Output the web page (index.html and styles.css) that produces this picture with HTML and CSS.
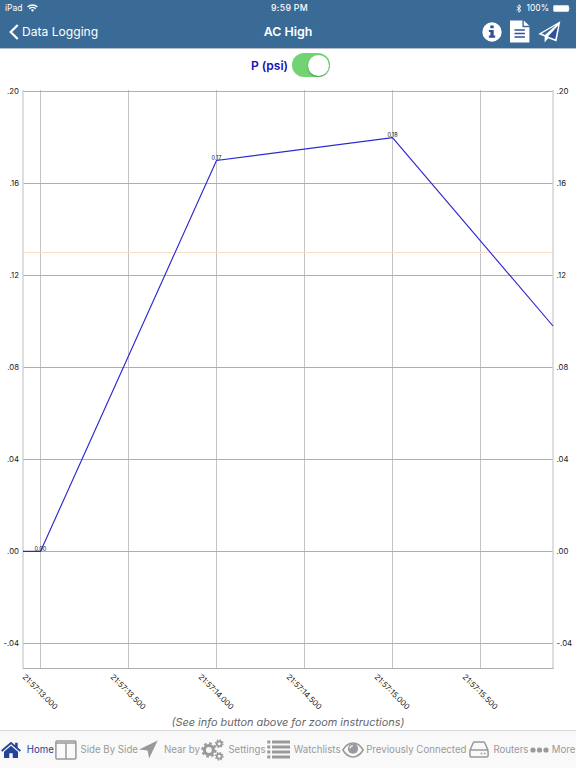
FILE: index.html
```html
<!DOCTYPE html>
<html lang="en">
<head>
  <meta charset="utf-8">
  <title>AC High</title>
  <link rel="stylesheet" href="styles.css">
</head>
<body>

  <header class="top">
    <div class="status">
      <div class="status-left">
        <span>iPad</span>
        <svg width="11" height="8" viewBox="0 0 11 8" fill="none" stroke="#fff" stroke-width="1.3">
          <path d="M.6 3a7 7 0 0 1 9.8 0M2.3 4.8a4.6 4.6 0 0 1 6.4 0"/>
          <path d="M3.8 6.1a2.5 2.5 0 0 1 3.4 0L5.5 7.8z" fill="#fff" stroke="none"/>
        </svg>
      </div>
      <div class="clock">9:59 PM</div>
      <div class="status-right">
        <svg width="6" height="9" viewBox="0 0 6 9" fill="none" stroke="#fff" stroke-width=".9">
          <path d="M.6 2.4l4.4 4L2.9 8.3V.7L5 2.6l-4.4 4"/>
        </svg>
        <span>100%</span>
        <svg width="18" height="7" viewBox="0 0 18 7">
          <rect x=".3" y=".3" width="15.6" height="6.4" rx="1.2" fill="#fff"/>
          <path d="M16.7 2.3q1.1 1.2 0 2.4z" fill="#fff"/>
        </svg>
      </div>
    </div>

    <nav class="nav">
      <div class="back">
        <svg width="10" height="16" viewBox="0 0 10 16" fill="none" stroke="#fff" stroke-width="2.2">
          <path d="M8.7 .9L1.7 8l7 7.1"/>
        </svg>
        <span>Data Logging</span>
      </div>
      <h1 class="title">AC High</h1>
      <div class="actions">
        <!-- info -->
        <svg width="20" height="20" viewBox="0 0 20 20">
          <circle cx="10" cy="10" r="9.7" fill="#fff"/>
          <path d="M8.3 3.4h3.4v2.9H8.3zM6.9 7.9h4.8v5.6h1.5v2.2H6.9v-2.2h1.5v-3.4H6.9z" fill="#30509b"/>
        </svg>
        <!-- report -->
        <svg width="20" height="23" viewBox="0 0 20 23">
          <path d="M0 .4h12.4v6.8h7V22.6H0z" fill="#fff"/>
          <path d="M13.8 .4l5.6 5.4h-5.6z" fill="#fff"/>
          <path d="M4.5 10h10.4M4.5 13.5h10.4M4.5 17h10.4" stroke="#30509b" stroke-width="1.5"/>
        </svg>
        <!-- send -->
        <svg width="23" height="22" viewBox="0 0 23 22">
          <path d="M22.3 .3L.3 12.9l6.3 2.7v6l3.6-4.3 8.3 3.1z" fill="#fff"/>
          <path d="M18.2 4.1L3.7 12.6l3.3 1.3z" fill="#3a6b96"/>
          <path d="M20.2 4.6L10 15.5l7.2 2.7z" fill="#30509b"/>
        </svg>
      </div>
    </nav>
  </header>

  <main class="content">
    <div class="legend">
      <span class="legend-name">P (psi)</span>
      <div class="switch"><div class="knob"></div></div>
    </div>

    <svg class="chart" width="576" height="630" viewBox="0 82 576 630">
      <g class="grid-v">
        <path d="M40.5 90V668M128.5 90V668M216.5 90V668M304.5 90V668M392.5 90V668M480.5 90V668"/>
      </g>
      <g class="grid-h">
        <path d="M23 91.5H553M23 183.5H553M23 275.5H553M23 367.5H553M23 459.5H553M23 551.5H553M23 643.5H553"/>
      </g>
      <path class="frame-side" d="M23 90V668.5M553 90V668.5"/>
      <path class="frame-bottom" d="M23 668.5H553.5"/>
      <path class="limit" d="M24 252.5H553"/>

      <g class="y-left">
        <text x="19" y="94">.20</text>
        <text x="19" y="186">.16</text>
        <text x="19" y="278">.12</text>
        <text x="19" y="370">.08</text>
        <text x="19" y="462">.04</text>
        <text x="19" y="554">.00</text>
        <text x="19" y="646">-.04</text>
      </g>
      <g class="y-right">
        <text x="556.5" y="94">.20</text>
        <text x="556.5" y="186">.16</text>
        <text x="556.5" y="278">.12</text>
        <text x="556.5" y="370">.08</text>
        <text x="556.5" y="462">.04</text>
        <text x="556.5" y="554">.00</text>
        <text x="556.5" y="646">-.04</text>
      </g>
      <g class="x-labels">
        <text transform="translate(22 677.5) rotate(45)" textLength="46">21:57:13.000</text>
        <text transform="translate(110 677.5) rotate(45)" textLength="46">21:57:13.500</text>
        <text transform="translate(198 677.5) rotate(45)" textLength="46">21:57:14.000</text>
        <text transform="translate(286 677.5) rotate(45)" textLength="46">21:57:14.500</text>
        <text transform="translate(374 677.5) rotate(45)" textLength="46">21:57:15.000</text>
        <text transform="translate(462 677.5) rotate(45)" textLength="46">21:57:15.500</text>
      </g>

      <path class="series" d="M23 551.4H40.5L216.5 160.5L392.5 137.7L553 326"/>
      <g class="values">
        <text x="40.3" y="550.5">0.00</text>
        <text x="216.5" y="159.5">0.17</text>
        <text x="392.5" y="136.7">0.18</text>
      </g>
    </svg>

    <p class="hint">(See info button above for zoom instructions)</p>
  </main>

  <footer class="tabs">
    <div class="tab active">
      <svg width="20" height="18" viewBox="0 0 20 18" fill="currentColor">
        <path d="M10 .8L0 9.3l1.2 1.4L10 3.3l8.8 7.4L20 9.3l-3.3-2.8V1.8h-2.6v2.5z"/>
        <path d="M10 4.8l-7 5.9V17h5.3v-4.8h3.4V17H17v-6.3z"/>
      </svg>
      <span>Home</span>
    </div>
    <div class="tab">
      <svg width="22" height="20" viewBox="0 0 22 20" fill="none" stroke="currentColor" stroke-width="1.5">
        <rect x=".9" y=".9" width="20" height="18.2" rx="1"/>
        <path d="M1 3h20M11 3v16"/>
      </svg>
      <span>Side By Side</span>
    </div>
    <div class="tab">
      <svg width="19" height="19" viewBox="0 0 19 19" fill="currentColor">
        <path d="M18.7 .5L0 9.6l8.6 1 1.5 8z"/>
      </svg>
      <span>Near by</span>
    </div>
    <div class="tab">
      <svg width="23" height="22" viewBox="0 0 23 22" fill="none" stroke="currentColor">
        <circle cx="7.9" cy="11" r="4.5" stroke-width="3.2"/>
        <circle cx="7.9" cy="11" r="6.7" stroke-width="2" stroke-dasharray="2.7 2.56"/>
        <circle cx="18.2" cy="4.7" r="2.4" stroke-width="1.7"/>
        <circle cx="18.2" cy="4.7" r="3.7" stroke-width="1.4" stroke-dasharray="1.5 1.4"/>
        <circle cx="18.2" cy="17.3" r="2.4" stroke-width="1.7"/>
        <circle cx="18.2" cy="17.3" r="3.7" stroke-width="1.4" stroke-dasharray="1.5 1.4"/>
      </svg>
      <span>Settings</span>
    </div>
    <div class="tab">
      <svg width="23" height="19" viewBox="0 0 23 19" stroke="currentColor" stroke-width="3">
        <path d="M.3 2h3M.3 7h3M.3 12h3M.3 17h3M5 2h18M5 7h18M5 12h18M5 17h18"/>
      </svg>
      <span>Watchlists</span>
    </div>
    <div class="tab">
      <svg width="22" height="16" viewBox="0 0 22 16" fill="none" stroke="currentColor" stroke-width="1.5">
        <path d="M.8 8Q5 1.1 11 1.1T21.2 8Q17 14.9 11 14.9T.8 8z"/>
        <circle cx="11" cy="6.7" r="5.1" fill="currentColor" stroke="none"/>
        <path d="M8 6.5q.2-2.5 2.8-2.9" stroke="#f9f9f9" stroke-width="1.1"/>
      </svg>
      <span>Previously Connected</span>
    </div>
    <div class="tab router">
      <svg width="20" height="17" viewBox="0 0 20 17" fill="none" stroke="currentColor" stroke-width="1.5">
        <path d="M1 9.2L4.2 1.8Q4.6.9 5.6.9h8.8q1 0 1.4.9L19 9.2"/>
        <rect x=".9" y="9" width="18.2" height="7.1" rx="1.5"/>
        <path d="M11.7 12.6h1.6M14.9 12.6h1.6"/>
      </svg>
      <span>Routers</span>
    </div>
    <div class="tab">
      <svg width="19" height="6" viewBox="0 0 19 6" fill="currentColor">
        <circle cx="3" cy="3" r="2.6"/><circle cx="9.5" cy="3" r="2.6"/><circle cx="16" cy="3" r="2.6"/>
      </svg>
      <span>More</span>
    </div>
  </footer>

</body>
</html>
```
FILE: styles.css
```css
* {
  box-sizing: border-box;
}

body {
  margin: 0;
  height: 768px;
  display: flex;
  flex-direction: column;
  background: #fff;
  font-family: Inter, Roboto, sans-serif;
  overflow: hidden;
}

svg {
  display: block;
  flex: none;
}

.top {
  height: 49px;
  background: #3a6b96;
  border-bottom: 1px solid #b4bcc5;
  color: #fff;
}

.status {
  display: grid;
  grid-template-columns: 1fr auto 1fr;
  align-items: center;
  height: 16px;
  padding: 0 5px;
  font-size: 8.5px;
}

.status-left,
.status-right {
  display: flex;
  align-items: center;
  gap: 5px;
}

.status-right {
  justify-content: flex-end;
  gap: 4px;
}

.clock {
  margin-left: 3px;
  font-size: 8.7px;
  font-weight: 500;
  letter-spacing: 0.3px;
}

.nav {
  display: grid;
  grid-template-columns: 1fr auto 1fr;
  align-items: center;
  height: 31px;
  padding: 0 15px 0 9px;
}

.back {
  display: flex;
  align-items: center;
  gap: 3px;
  font-size: 12.1px;
}

.title {
  margin: 0 0 0 6px;
  font-size: 12.4px;
  font-weight: 600;
}

.actions {
  display: flex;
  align-items: center;
  justify-content: flex-end;
  gap: 8px;
}

.content {
  flex: 1;
  display: flex;
  flex-direction: column;
}

.legend {
  display: flex;
  align-items: center;
  justify-content: center;
  gap: 4px;
  height: 33px;
  padding: 0 0 1px 5px;
}

.legend-name {
  color: #1410b4;
  font-size: 12px;
  font-weight: 600;
}

.switch {
  width: 38px;
  height: 24px;
  padding: 1.5px;
  border-radius: 12px;
  background: #71d371;
}

.knob {
  width: 21px;
  height: 21px;
  margin-left: auto;
  border-radius: 50%;
  background: #fff;
  box-shadow: 0 1px 2px rgba(0, 0, 0, 0.3);
}

/* chart */
.chart path {
  fill: none;
}

.grid-v {
  stroke: #c4c4c4;
}

.grid-h {
  stroke: #adadad;
}

.frame-side {
  stroke: #d0d0d0;
  stroke-width: 1.4;
}

.frame-bottom {
  stroke: #adadad;
}

.limit {
  stroke: #f3d3bf;
  stroke-dasharray: 1.5 0.5;
}

.series {
  stroke: #2c28d0;
  stroke-width: 1.15;
}

.y-left,
.y-right,
.x-labels {
  font-size: 7.8px;
  fill: #1a1a1a;
}

.y-left {
  text-anchor: end;
}

.values {
  font-size: 5.5px;
  text-anchor: middle;
  fill: #111;
}

.hint {
  margin: 3px 0 0;
  font-size: 10.9px;
  font-style: italic;
  line-height: 14px;
  text-align: center;
  color: #666;
}

/* bottom bar */
.tabs {
  display: grid;
  grid-template-columns: 54px 84px 62px 65.5px 75px 126px 62px 47px;
  height: 38px;
  border-top: 1px solid #d9d9d9;
  background: #f9f9f9;
  color: #999;
}

.tab {
  display: flex;
  align-items: center;
  justify-content: space-between;
  padding-left: 1px;
  font-size: 9.7px;
  white-space: nowrap;
}

.tab.active {
  color: #26439a;
}

.tab.router {
  padding-left: 2px;
}
```
